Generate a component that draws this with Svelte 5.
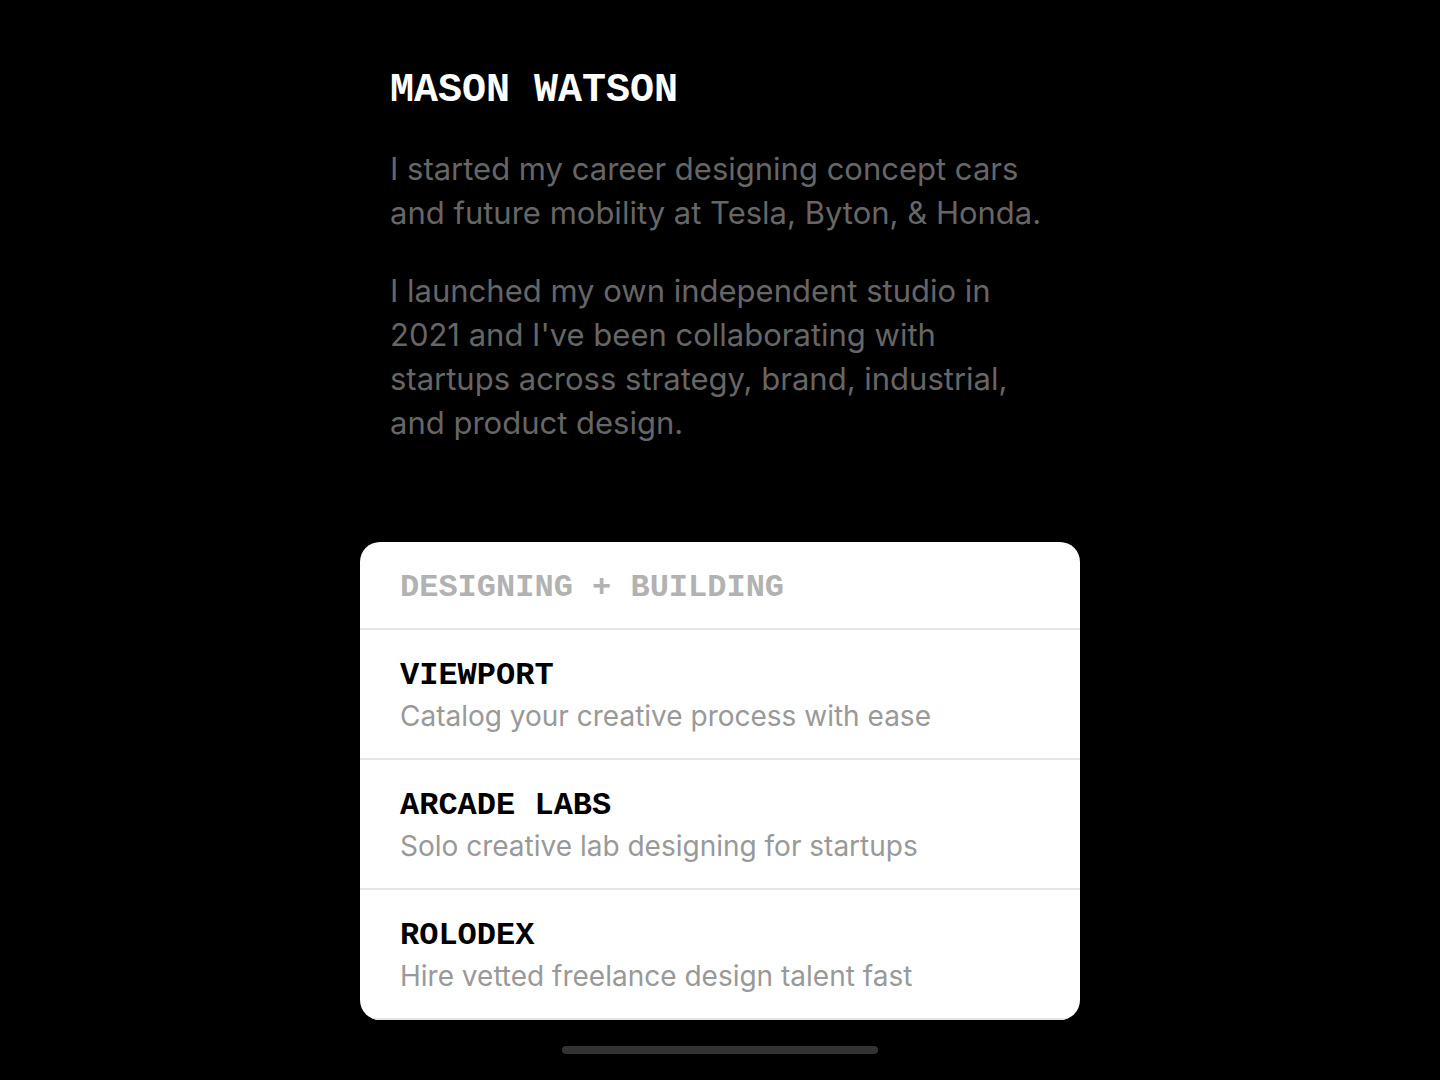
<script lang="ts">
	type Project = { name: string; description: string; href: string };

	const projects: Project[] = [
		{ name: 'VIEWPORT', description: 'Catalog your creative process with ease', href: '#viewport' },
		{ name: 'ARCADE LABS', description: 'Solo creative lab designing for startups', href: '#arcade-labs' },
		{ name: 'ROLODEX', description: 'Hire vetted freelance design talent fast', href: '#rolodex' }
	];
</script>

<main>
	<header class="intro">
		<h1>MASON WATSON</h1>
		<p>
			I started my career designing concept cars<br />
			and future mobility at Tesla, Byton, &amp; Honda.
		</p>
		<p>
			I launched my own independent studio in<br />
			2021 and I've been collaborating with<br />
			startups across strategy, brand, industrial,<br />
			and product design.
		</p>
	</header>

	<section class="card">
		<h2>DESIGNING + BUILDING</h2>
		<ul>
			{#each projects as project (project.name)}
				<li>
					<a href={project.href}>
						<span class="name">{project.name}</span>
						<span class="desc">{project.description}</span>
					</a>
				</li>
			{/each}
		</ul>
	</section>

	<div class="handle"></div>
</main>

<style>
	:global(body) {
		margin: 0;
		background: #000;
	}
	main {
		box-sizing: border-box;
		max-width: 720px;
		margin: 0 auto;
		padding: 71px 0 26px;
		font-family: Inter, sans-serif;
	}
	h1,
	h2,
	.name {
		font-family: 'Liberation Mono', monospace;
		font-weight: 700;
	}
	.intro {
		padding: 0 30px;
	}
	h1 {
		margin: 0 0 36px;
		font-size: 40px;
		line-height: 40px;
		color: #fff;
	}
	p {
		margin: 0 0 34px;
		font-size: 31px;
		line-height: 44px;
		color: #666;
	}
	.card {
		margin-top: 97px;
		border-radius: 20px;
		background: #fff;
		overflow: hidden;
	}
	h2 {
		margin: 0;
		padding: 28px 40px 22px;
		border-bottom: 2px solid #e5e5e5;
		font-size: 32px;
		line-height: 36px;
		color: #b2b2b2;
	}
	ul {
		margin: 0;
		padding: 0;
		list-style: none;
	}
	a {
		display: block;
		padding: 28px 40px 24px;
		border-bottom: 2px solid #e5e5e5;
		text-decoration: none;
	}
	.name,
	.desc {
		display: block;
	}
	.name {
		margin-bottom: 4px;
		font-size: 32px;
		line-height: 36px;
		color: #000;
	}
	.desc {
		font-size: 28px;
		line-height: 36px;
		color: #999;
	}
	.handle {
		width: 316px;
		height: 8px;
		margin: 26px auto 0;
		border-radius: 4px;
		background: #333;
	}
</style>
